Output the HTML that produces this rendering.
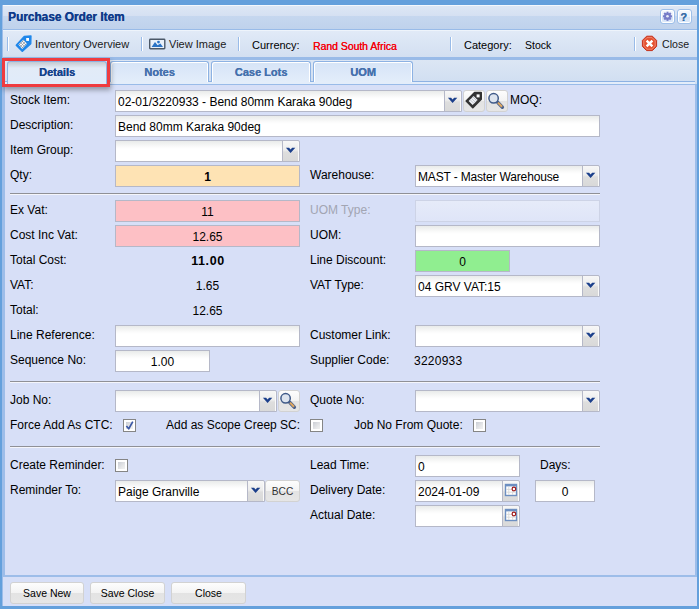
<!DOCTYPE html>
<html><head><meta charset="utf-8">
<style>
*{box-sizing:border-box;margin:0;padding:0}
html,body{width:699px;height:609px;overflow:hidden}
body{position:relative;background:#64a0dc;font-family:"Liberation Sans",sans-serif;font-size:12px;color:#000}
.a{position:absolute}
.hdr{left:3px;top:5px;width:694px;height:25px;background:linear-gradient(#dde7f5 0,#d5e0f2 10px,#c6d7ef 10px,#bfd2ec 100%);border-top:1px solid #f4f8fd;border-bottom:1px solid #99bbe8}
.tb{left:3px;top:30px;width:694px;height:28px;background:linear-gradient(#e1eaf7,#d2dff1);border-top:1px solid #eef4fb}
.sep{width:2px;height:14px;border-left:1px solid #99bbe8;border-right:1px solid #fff}
.tabs{left:3px;top:57px;width:694px;height:28px;background:linear-gradient(#dce6f4,#d0def1);border-top:3px solid #99bbe8;border-bottom:1px solid #99bbe8}
.tabln{left:5px;top:81px;width:690px;height:3px;border-top:1px solid #8db2e3;background:#e3edfa}
.body{left:5px;top:85px;width:690px;height:490px;background:#d7dff7}
.foot{left:3px;top:577px;width:694px;height:29px;background:#d7dff7}
.lbl{position:absolute;font-size:12px;line-height:14px;white-space:nowrap}
.val{position:absolute;font-size:12px;line-height:14px;white-space:nowrap}
.fld{position:absolute;height:22px;border:1px solid #b5b8c8;background:linear-gradient(#e9ebea 0,#fbfbfb 6px,#fff 8px,#fff 100%);font-size:12px;line-height:20px;padding-left:3px;white-space:nowrap;overflow:hidden}
.trg{position:absolute;width:18px;height:22px;border:1px solid #b5b8c8;border-radius:0 2px 0 0;box-shadow:inset -1px 0 0 #fafafa;background:linear-gradient(#f7f7f7 0,#ededed 45%,#dedede 55%,#d9d9d9 100%)}
.trg svg{position:absolute;left:0;top:0}
.btn{position:absolute;border:1px solid #d2d2d2;border-radius:3px;background:linear-gradient(#fdfdfd 0,#f3f3f3 50%,#e3e3e3 51%,#e6e6e6 100%)}
.hr{position:absolute;left:10px;width:590px;height:2px;border-top:1px solid #8f9096;border-bottom:1px solid #f4f5fb}
.cb{position:absolute;width:13px;height:13px;border:1px solid #858585;padding:1px;background:linear-gradient(135deg,#c4c8d0,#e6e7e9 60%,#f5f5f5) content-box,#fff;box-shadow:inset 0 0 0 2px #fff}
.tab{position:absolute;top:61px;height:21px;border:1px solid #8db2e3;border-bottom:none;border-radius:3px 3px 0 0;box-shadow:inset 1px 1px 0 #fff,inset -1px 0 0 #fff;background:linear-gradient(#d6e4f7,#e3edfa);color:#4570ad;text-shadow:0.3px 0 0 #4570ad;font-weight:bold;font-size:11px;text-align:center;line-height:20px}
</style></head>
<body>
<!-- window frame -->
<div class="a" style="left:2px;top:5px;width:695px;height:601px;background:#9dbde9"></div>
<div class="a hdr"></div>
<div class="a" style="left:8px;top:10px;font-weight:bold;font-size:11.85px;color:#103b8a;line-height:14px;text-shadow:0.3px 0 0 #103b8a">Purchase Order Item</div>
<div class="a tb"></div>
<div class="a tabs"></div>
<div class="a tabln"></div>
<div class="a body"></div>
<div class="a foot"></div>

<!-- tabs -->
<div class="tab" style="left:7px;width:100px;height:23px;color:#15428b;text-shadow:0.3px 0 0 #15428b;box-shadow:none;background:linear-gradient(#c4c9cf 0,#e2ebf7 6px,#e0ebfa 100%)">Details</div>
<div class="tab" style="left:110px;width:99px">Notes</div>
<div class="tab" style="left:211px;width:100px">Case Lots</div>
<div class="tab" style="left:313px;width:100px">UOM</div>
<div class="a" style="left:2px;top:58px;width:108px;height:29px;border:3px solid #ef3b3f;box-shadow:1px 3px 5px rgba(0,0,0,.33)"></div>

<!-- toolbar -->
<div class="a sep" style="left:7px;top:37px"></div>
<div class="a" style="left:35px;top:38px;font-size:11px;color:#1a1a1a;line-height:13px">Inventory Overview</div>
<div class="a sep" style="left:141px;top:37px"></div>
<div class="a" style="left:169px;top:38px;font-size:11px;color:#1a1a1a;line-height:13px">View Image</div>
<div class="a sep" style="left:238px;top:37px"></div>
<div class="a" style="left:252px;top:39px;font-size:11px;color:#000;line-height:13px">Currency:</div>
<div class="a" style="left:313px;top:40px;font-size:10.4px;color:#f5000a;line-height:13px;text-shadow:0.25px 0 0 #f5000a">Rand South Africa</div>
<div class="a sep" style="left:450px;top:37px"></div>
<div class="a" style="left:464px;top:39px;font-size:11px;color:#000;line-height:13px">Category:</div>
<div class="a" style="left:525px;top:39px;font-size:10.5px;color:#000;line-height:13px">Stock</div>
<div class="a sep" style="left:634px;top:37px"></div>
<div class="a" style="left:662px;top:38px;font-size:10.6px;color:#1a1a1a;line-height:13px">Close</div>

<!-- form rows -->
<div class="lbl" style="left:10px;top:93px">Stock Item:</div>
<div class="fld" style="left:115px;top:90px;width:330px;padding-left:2px;line-height:22px">02-01/3220933 - Bend 80mm Karaka 90deg</div>
<div class="trg" style="left:444px;top:90px"><svg width="16" height="20" viewBox="0 0 16 20"><path d="M2.9,6.8 L6.1,6.8 L7.6,8.5 L9.1,6.8 L12.3,6.8 L7.6,12 Z" fill="#1b3f8b"/></svg></div>
<div class="btn" style="left:463px;top:90px;width:22px;height:22px"></div>
<div class="btn" style="left:486px;top:90px;width:22px;height:22px"></div>
<div class="lbl" style="left:510px;top:93px">MOQ:</div>

<div class="lbl" style="left:10px;top:118px">Description:</div>
<div class="fld" style="left:115px;top:115px;width:485px;padding-left:2px;line-height:22px">Bend 80mm Karaka 90deg</div>

<div class="lbl" style="left:10px;top:143px">Item Group:</div>
<div class="fld" style="left:115px;top:140px;width:168px"></div>
<div class="trg" style="left:282px;top:140px"><svg width="16" height="20" viewBox="0 0 16 20"><path d="M2.9,6.8 L6.1,6.8 L7.6,8.5 L9.1,6.8 L12.3,6.8 L7.6,12 Z" fill="#1b3f8b"/></svg></div>

<div class="lbl" style="left:10px;top:168px">Qty:</div>
<div class="fld" style="left:115px;top:165px;width:185px;background:#fee3b4;text-align:center;font-weight:bold;line-height:22px;padding-left:0">1</div>
<div class="lbl" style="left:310px;top:168px">Warehouse:</div>
<div class="fld" style="left:415px;top:165px;width:168px;padding-left:2px;line-height:22px;letter-spacing:-.16px">MAST - Master Warehouse</div>
<div class="trg" style="left:582px;top:165px"><svg width="16" height="20" viewBox="0 0 16 20"><path d="M2.9,6.8 L6.1,6.8 L7.6,8.5 L9.1,6.8 L12.3,6.8 L7.6,12 Z" fill="#1b3f8b"/></svg></div>

<div class="hr" style="top:193px"></div>

<div class="lbl" style="left:10px;top:203px">Ex Vat:</div>
<div class="fld" style="left:115px;top:200px;width:185px;background:#fdc0c5;text-align:center;line-height:22px;padding-left:0">11</div>
<div class="lbl" style="left:310px;top:203px;color:#a2a5b2">UOM Type:</div>
<div class="fld" style="left:415px;top:200px;width:185px;background:linear-gradient(#e6ebf9,#dfe5f8);border-color:#cdd3e6"></div>

<div class="lbl" style="left:10px;top:228px">Cost Inc Vat:</div>
<div class="fld" style="left:115px;top:225px;width:185px;background:#fdc0c5;text-align:center;line-height:22px;padding-left:0">12.65</div>
<div class="lbl" style="left:310px;top:228px">UOM:</div>
<div class="fld" style="left:415px;top:225px;width:185px"></div>

<div class="lbl" style="left:10px;top:253px">Total Cost:</div>
<div class="val" style="left:115px;top:254px;width:185px;text-align:center;font-weight:bold;font-size:12.5px;letter-spacing:.6px;padding-left:1px">11.00</div>
<div class="lbl" style="left:310px;top:253px">Line Discount:</div>
<div class="fld" style="left:415px;top:250px;width:95px;background:#90ee90;text-align:center;line-height:22px;padding-left:0">0</div>

<div class="lbl" style="left:10px;top:278px">VAT:</div>
<div class="val" style="left:115px;top:279px;width:185px;text-align:center">1.65</div>
<div class="lbl" style="left:310px;top:278px">VAT Type:</div>
<div class="fld" style="left:415px;top:275px;width:168px;padding-left:2px;line-height:22px">04 GRV VAT:15</div>
<div class="trg" style="left:582px;top:275px"><svg width="16" height="20" viewBox="0 0 16 20"><path d="M2.9,6.8 L6.1,6.8 L7.6,8.5 L9.1,6.8 L12.3,6.8 L7.6,12 Z" fill="#1b3f8b"/></svg></div>

<div class="lbl" style="left:10px;top:303px">Total:</div>
<div class="val" style="left:115px;top:304px;width:185px;text-align:center">12.65</div>

<div class="lbl" style="left:10px;top:328px">Line Reference:</div>
<div class="fld" style="left:115px;top:325px;width:185px"></div>
<div class="lbl" style="left:310px;top:328px">Customer Link:</div>
<div class="fld" style="left:415px;top:325px;width:168px"></div>
<div class="trg" style="left:582px;top:325px"><svg width="16" height="20" viewBox="0 0 16 20"><path d="M2.9,6.8 L6.1,6.8 L7.6,8.5 L9.1,6.8 L12.3,6.8 L7.6,12 Z" fill="#1b3f8b"/></svg></div>

<div class="lbl" style="left:10px;top:353px">Sequence No:</div>
<div class="fld" style="left:115px;top:350px;width:95px;text-align:center;line-height:22px;padding-left:0">1.00</div>
<div class="lbl" style="left:310px;top:353px">Supplier Code:</div>
<div class="val" style="left:414px;top:354px;letter-spacing:.25px">3220933</div>

<div class="hr" style="top:381px"></div>

<div class="lbl" style="left:10px;top:393px">Job No:</div>
<div class="fld" style="left:115px;top:390px;width:145px"></div>
<div class="trg" style="left:259px;top:390px"><svg width="16" height="20" viewBox="0 0 16 20"><path d="M2.9,6.8 L6.1,6.8 L7.6,8.5 L9.1,6.8 L12.3,6.8 L7.6,12 Z" fill="#1b3f8b"/></svg></div>
<div class="btn" style="left:278px;top:390px;width:22px;height:22px"></div>
<div class="lbl" style="left:310px;top:393px">Quote No:</div>
<div class="fld" style="left:415px;top:390px;width:168px"></div>
<div class="trg" style="left:582px;top:390px"><svg width="16" height="20" viewBox="0 0 16 20"><path d="M2.9,6.8 L6.1,6.8 L7.6,8.5 L9.1,6.8 L12.3,6.8 L7.6,12 Z" fill="#1b3f8b"/></svg></div>

<div class="lbl" style="left:10px;top:418px">Force Add As CTC:</div>
<div class="cb" style="left:123px;top:419px"></div>
<div class="lbl" style="left:166px;top:418px">Add as Scope Creep SC:</div>
<div class="cb" style="left:310px;top:419px"></div>
<div class="lbl" style="left:354px;top:418px">Job No From Quote:</div>
<div class="cb" style="left:473px;top:419px"></div>

<div class="hr" style="top:446px"></div>

<div class="lbl" style="left:10px;top:458px">Create Reminder:</div>
<div class="cb" style="left:115px;top:459px"></div>
<div class="lbl" style="left:310px;top:458px">Lead Time:</div>
<div class="fld" style="left:415px;top:455px;width:105px;padding-left:2px;line-height:22px">0</div>
<div class="lbl" style="left:540px;top:458px">Days:</div>

<div class="lbl" style="left:10px;top:483px">Reminder To:</div>
<div class="fld" style="left:115px;top:480px;width:133px;padding-left:2px;line-height:22px">Paige Granville</div>
<div class="trg" style="left:247px;top:480px"><svg width="16" height="20" viewBox="0 0 16 20"><path d="M2.9,6.8 L6.1,6.8 L7.6,8.5 L9.1,6.8 L12.3,6.8 L7.6,12 Z" fill="#1b3f8b"/></svg></div>
<div class="btn" style="left:265px;top:480px;width:35px;height:22px;font-size:10.2px;color:#333;text-align:center;line-height:21px">BCC</div>
<div class="lbl" style="left:310px;top:483px">Delivery Date:</div>
<div class="fld" style="left:415px;top:480px;width:88px;padding-left:2px;line-height:22px">2024-01-09</div>
<div class="trg" style="left:502px;top:480px"><svg width="16" height="20" viewBox="0 0 16 20"><rect x="2.5" y="3.5" width="11" height="11" fill="#fff" stroke="#6d8fc1" stroke-width="1.4"/><rect x="2" y="3" width="12" height="2.4" fill="#6d8fc1"/><path d="M5.8,5.5 V14 M9.6,5.5 V14 M3,8.4 H13 M3,11.2 H13" stroke="#d8d8d8" stroke-width=".9"/><circle cx="10.9" cy="8" r="1.8" fill="#fff" stroke="#a01818" stroke-width="1.2"/></svg></div>
<div class="fld" style="left:535px;top:480px;width:60px;text-align:center;line-height:22px;padding-left:0">0</div>

<div class="lbl" style="left:310px;top:508px">Actual Date:</div>
<div class="fld" style="left:415px;top:505px;width:88px"></div>
<div class="trg" style="left:502px;top:505px"><svg width="16" height="20" viewBox="0 0 16 20"><rect x="2.5" y="3.5" width="11" height="11" fill="#fff" stroke="#6d8fc1" stroke-width="1.4"/><rect x="2" y="3" width="12" height="2.4" fill="#6d8fc1"/><path d="M5.8,5.5 V14 M9.6,5.5 V14 M3,8.4 H13 M3,11.2 H13" stroke="#d8d8d8" stroke-width=".9"/><circle cx="10.9" cy="8" r="1.8" fill="#fff" stroke="#a01818" stroke-width="1.2"/></svg></div>


<!-- header tool buttons -->
<div class="a" style="left:660px;top:9px;width:15px;height:15px;border:1px solid #9dbfe9;border-radius:3px;background:linear-gradient(#f4f8fd 0,#eaf1fb 50%,#d6e4f6 51%,#dce8f8 100%);box-shadow:inset 0 0 0 1px #fff"></div>
<svg class="a" style="left:661px;top:9px" width="14" height="15" viewBox="0 0 14 15">
<g transform="translate(6.5,7.3)">
<g fill="#767cc8"><circle r="3.4"/>
<rect x="-1" y="-4.6" width="2" height="9.2"/><rect x="-1" y="-4.6" width="2" height="9.2" transform="rotate(45)"/><rect x="-1" y="-4.6" width="2" height="9.2" transform="rotate(90)"/><rect x="-1" y="-4.6" width="2" height="9.2" transform="rotate(135)"/></g>
<circle r="1.3" fill="#e9edf9"/>
</g></svg>
<div class="a" style="left:677px;top:9px;width:15px;height:15px;border:1px solid #9dbfe9;border-radius:3px;background:linear-gradient(#f4f8fd 0,#eaf1fb 50%,#d6e4f6 51%,#dce8f8 100%);box-shadow:inset 0 0 0 1px #fff"></div>
<div class="a" style="left:677px;top:9px;width:15px;height:15px;text-align:center;font-weight:bold;font-size:11px;line-height:16px;color:#3a6ea8;padding-right:2px;text-shadow:0.4px 0 0 #3a6ea8">?</div>

<!-- toolbar icons -->
<svg class="a" style="left:15px;top:35px" width="18" height="18" viewBox="0 0 18 18">
<path d="M1.2,10.2 L9.2,1.4 L16,1 L15.8,8.8 L7.2,16.4 Z" fill="#1f87ea" stroke="#1f87ea" stroke-width="1.3" stroke-linejoin="round"/>
<clipPath id="tc"><path d="M3.4,9.6 L8.3,4.7 L12,8.7 L7.2,13.9 Z"/></clipPath>
<path d="M3.4,9.6 L8.3,4.7 L12,8.7 L7.2,13.9 Z" fill="#f4f6f8"/>
<g clip-path="url(#tc)" stroke="#7d8896" stroke-width=".6"><path d="M2,7 L12,17 M3.5,5.5 L13.5,15.5 M5,4 L15,14 M6.5,2.5 L16.5,12.5 M2,12 L11,3 M3.5,13.5 L12.5,4.5 M5,15 L14,6 M6.5,16.5 L15.5,7.5"/></g>
<rect x="11.2" y="3" width="2.8" height="2.9" fill="#fff"/>
</svg>
<svg class="a" style="left:149px;top:38px" width="17" height="12" viewBox="0 0 17 12">
<rect x="0.7" y="1.3" width="15.1" height="9.4" rx="0.7" fill="#e8f0fa" stroke="#4b5868" stroke-width="1.4"/>
<path d="M2.6,9 L6,4 L8.6,7.2 L11.4,5.6 L14,9 Z" fill="#2a73c5"/>
<circle cx="9.5" cy="4.1" r="1.4" fill="#2a73c5"/>
</svg>
<svg class="a" style="left:641px;top:35px" width="17" height="17" viewBox="0 0 17 17">
<path d="M5.6,1.2 L11.4,1.2 L15.6,5.4 L15.6,11.4 L11.4,15.6 L5.6,15.6 L1.4,11.4 L1.4,5.4 Z" fill="#e4502f" stroke="#c4321c" stroke-width="1"/>
<path d="M6,2.6 L11,2.6 L14.2,5.8 L14.2,11 L11,14.2 L6,14.2 L2.8,11 L2.8,5.8 Z" fill="none" stroke="#f39a86" stroke-width=".7"/>
<path d="M5.6,5.6 L11.4,11.4 M11.4,5.6 L5.6,11.4" stroke="#fff" stroke-width="2.4"/>
</svg>

<!-- stock item buttons icons -->
<svg class="a" style="left:463px;top:90px" width="22" height="22" viewBox="0 0 22 22">
<path d="M3.2,11 L11.6,2.6 L18.2,2.6 L18.2,9.2 L9.8,17.6 Z" fill="#333" stroke="#333" stroke-width="1.6" stroke-linejoin="round"/>
<path d="M5.6,11 L10.6,6 L14.6,10 L9.6,15 Z" fill="#f2f4f8"/>
<path d="M7,9.6 L11,13.6 M8.4,8.2 L12.4,12.2 M9.8,6.8 L13.8,10.8" stroke="#9aa0a8" stroke-width=".6"/>
<rect x="13.6" y="4.4" width="3" height="3" fill="#fff"/>
</svg>
<svg class="a" style="left:486px;top:90px" width="22" height="22" viewBox="0 0 22 22">
<path d="M11.6,12.2 L16.4,17.2" stroke="#4a618c" stroke-width="3.4" stroke-linecap="round"/>
<path d="M12,12.6 L16,16.8" stroke="#e2a85e" stroke-width="2"/>
<circle cx="7.6" cy="8.3" r="4.7" fill="#dde4ee" stroke="#3f5a88" stroke-width="1.5"/>
</svg>
<svg class="a" style="left:278px;top:390px" width="22" height="22" viewBox="0 0 22 22">
<path d="M11.6,12.2 L16.4,17.2" stroke="#4a618c" stroke-width="3.4" stroke-linecap="round"/>
<path d="M12,12.6 L16,16.8" stroke="#e2a85e" stroke-width="2"/>
<circle cx="7.6" cy="8.3" r="4.7" fill="#dde4ee" stroke="#3f5a88" stroke-width="1.5"/>
</svg>

<!-- check mark -->
<svg class="a" style="left:123px;top:419px" width="13" height="13" viewBox="0 0 13 13">
<path d="M3.4,7 L5.7,9.8 L9.8,2.6" stroke="#3b58a6" stroke-width="1.7" fill="none" stroke-linejoin="round"/>
</svg>

<!-- footer buttons -->
<div class="btn" style="left:10px;top:582px;width:74px;height:22px;font-size:10.5px;text-align:center;line-height:20px">Save New</div>
<div class="btn" style="left:90px;top:582px;width:75px;height:22px;font-size:10.5px;text-align:center;line-height:20px">Save Close</div>
<div class="btn" style="left:171px;top:582px;width:75px;height:22px;font-size:10.5px;text-align:center;line-height:20px">Close</div>
</body></html>
